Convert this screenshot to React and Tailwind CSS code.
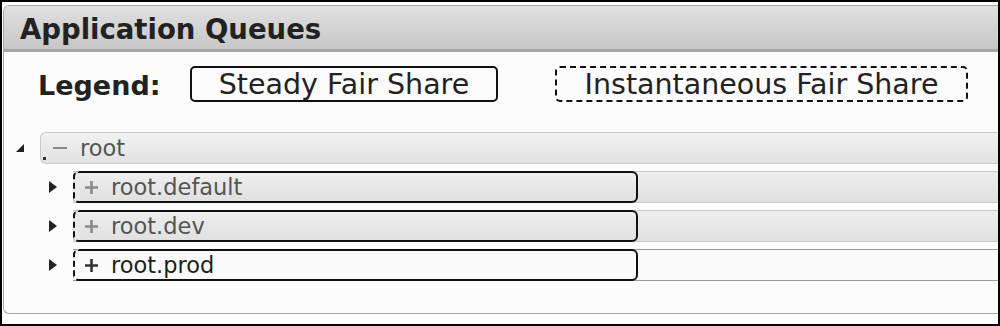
import React from "react";

const queues = [
  { name: "root.default", active: false },
  { name: "root.dev", active: false },
  { name: "root.prod", active: true },
];

function Plus({ dark }) {
  return (
    <svg width="15" height="15" viewBox="0 0 15 15" className="shrink-0">
      <path
        d="M7.5 1v13M1 7.5h13"
        stroke={dark ? "#333" : "#8a8a8a"}
        strokeWidth="2.6"
      />
    </svg>
  );
}

function QueueRow({ name, active }) {
  return (
    <div className="flex items-center pl-[45px]">
      <div className="w-[24px] shrink-0">
        <svg width="8" height="12" viewBox="0 0 8 12">
          <path d="M0 0L8 6L0 12Z" fill="#222" />
        </svg>
      </div>
      <div className="relative h-8 flex-1">
        <div
          className={
            active
              ? "absolute inset-0 border-y border-[#9c9c9c] bg-[#fafafa]"
              : "absolute inset-0 border-y border-[#c8c8c8] bg-gradient-to-b from-[#eeeeee] to-[#e0e0e0]"
          }
        ></div>
        <div className="absolute left-0 top-0 bottom-0 w-[565px] border-2 border-[#111] rounded-md"></div>
        <div
          className={`absolute left-0 top-0 bottom-0 w-[7px] border-2 border-r-0 border-dashed border-[#111] rounded-l-md ${
            active ? "bg-[#fafafa]" : "bg-[#e8e8e8]"
          }`}
        ></div>
        <div className="relative h-full flex items-center pl-[11px]">
          <Plus dark={active} />
          <span
            className={`ml-[12px] text-[22.5px] leading-none ${
              active ? "text-[#1e1e1e]" : "text-[#555]"
            }`}
          >
            {name}
          </span>
        </div>
      </div>
    </div>
  );
}

export default function App() {
  return (
    <div
      className="w-[1000px] h-[326px] border-2 border-black bg-white overflow-hidden pl-px pt-[3px]"
      style={{ fontFamily: '"DejaVu Sans", Verdana, sans-serif' }}
    >
      <div className="h-[309px] border border-r-0 border-[#a8a8a8] rounded-l-md bg-[#fcfcfc] overflow-hidden">
        <div className="h-[46px] bg-gradient-to-b from-[#e0e0e0] to-[#c7c7c7] border-b-[3px] border-[#a6a6a6] pl-4 pt-[5px] flex items-center">
          <h1 className="text-[27.5px] font-bold text-[#222] leading-none">
            Application Queues
          </h1>
        </div>

        <div className="mt-[14px] flex items-center pl-[34px]">
          <span className="w-[152px] pt-[2px] text-[27px] font-bold text-[#222] leading-none">
            Legend:
          </span>
          <div className="w-[308px] h-9 pt-[3px] border-2 border-[#111] rounded-[5px] flex items-center justify-center text-[28.5px] text-[#222] leading-none">
            Steady Fair Share
          </div>
          <div className="ml-[57px] w-[413px] h-9 pt-[3px] border-2 border-dashed border-[#111] rounded-[5px] flex items-center justify-center text-[28.5px] text-[#222] leading-none">
            Instantaneous Fair Share
          </div>
        </div>

        <div className="mt-[30px] flex flex-col gap-[7px]">
          <div className="flex items-center pl-[10px]">
            <div className="w-[26px] shrink-0">
              <svg width="8" height="8" viewBox="0 0 8 8" className="ml-[2px]">
                <path d="M8 0L8 8L0 8Z" fill="#222" />
              </svg>
            </div>
            <div className="h-8 flex-1 border border-r-0 border-[#cacaca] rounded-l-md bg-gradient-to-b from-[#f1f1f1] to-[#e2e2e2] flex items-center">
              <span className="ml-[2px] mt-[20px] w-[3px] h-[3px] bg-[#333]"></span>
              <span className="ml-[7px] w-[14px] h-[2px] bg-[#8a8a8a]"></span>
              <span className="ml-[13px] text-[22.5px] leading-none text-[#555]">
                root
              </span>
            </div>
          </div>
          {queues.map((q) => (
            <QueueRow key={q.name} name={q.name} active={q.active} />
          ))}
        </div>
      </div>
    </div>
  );
}
